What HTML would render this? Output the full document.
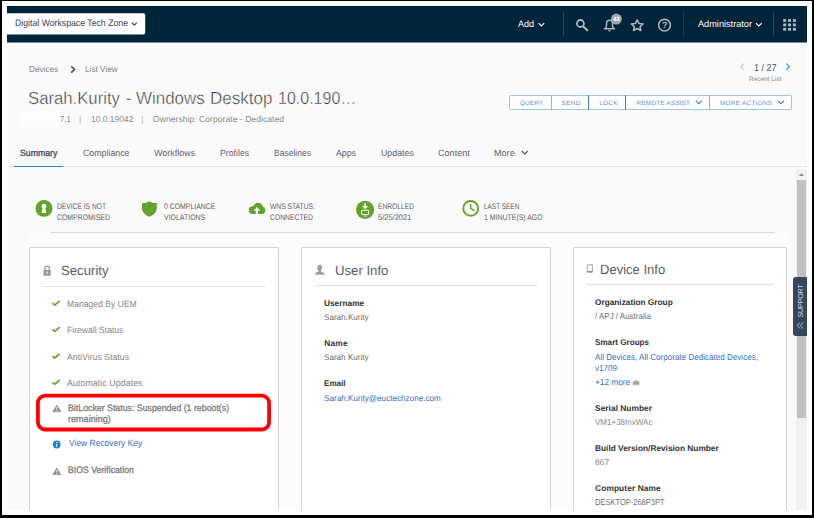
<!DOCTYPE html>
<html lang="en">
<head>
<meta charset="utf-8">
<title>Device Details - Sarah.Kurity</title>
<style>
html,body{margin:0;padding:0;}
body{width:814px;height:518px;position:relative;overflow:hidden;background:#ffffff;
  font-family:"Liberation Sans",sans-serif;}
.a{position:absolute;}
.t{position:absolute;white-space:pre;line-height:1;text-rendering:geometricPrecision;transform-origin:0 50%;font-family:"Liberation Sans",sans-serif;}
svg{position:absolute;overflow:visible;}
.frame{left:0;top:0;width:810px;height:514px;border-style:solid;border-color:#000;border-width:1px 2px 3px 2px;}
.page{left:7px;top:6px;width:800px;height:504px;background:#fafafa;overflow:hidden;}
.hdr{left:7px;top:6px;width:800px;height:36.6px;background:#00243a;}
.og{left:7px;top:13.2px;width:138px;height:21.3px;background:#fff;border-radius:0 2px 2px 0;}
.vd{width:1px;top:12.3px;height:23.7px;background:#2a4558;}
.card{background:#fff;border:1px solid #d3d3d3;border-radius:1.5px;box-sizing:border-box;top:247px;height:280px;}
.hl{height:1px;background:#dfdfdf;}
.btns{left:508.5px;top:94.7px;width:283.5px;height:15.7px;box-sizing:border-box;background:#fff;border:1px solid #a2c4ed;border-radius:2px;}
.bd{top:94.7px;width:1.1px;height:15.7px;background:#3f82d4;}
</style>
</head>
<body>
<div class="a page"></div>
<svg style="left:0;top:0" width="814" height="518" viewBox="0 0 814 518">
  <rect x="7" y="6" width="800" height="36.5" fill="#00243a"/>
  <path d="M7 13.2 L143.2 13.2 Q145.2 13.2 145.2 15.2 L145.2 32.6 Q145.2 34.6 143.2 34.6 L7 34.6 Z" fill="#fff"/>
</svg>
<div class="a vd" style="left:562.8px"></div>
<div class="a vd" style="left:683.4px;background:#1c3a4e"></div>
<div class="a vd" style="left:772.8px"></div>

<!-- header icons -->
<svg style="left:0;top:0" width="814" height="518" viewBox="0 0 814 518">
  <!-- chevrons -->
  <path d="M131.8 22.7 L134.3 25.2 L136.8 22.7" fill="none" stroke="#3d4258" stroke-width="1.2"/>
  <path d="M538.6 23.2 L541.4 25.9 L544.2 23.2" fill="none" stroke="#fff" stroke-width="1.1"/>
  <path d="M755.9 23.1 L758.8 25.9 L761.7 23.1" fill="none" stroke="#fff" stroke-width="1.1"/>
  <!-- search -->
  <circle cx="580.4" cy="23.5" r="3.5" fill="none" stroke="#aeb8bf" stroke-width="1.8"/>
  <path d="M583.2 26.4 L587.3 30.2" stroke="#aeb8bf" stroke-width="2.1" stroke-linecap="round"/>
  <!-- bell -->
  <path d="M604.9 28.6 C606 27.8 606.5 27.2 606.5 26 L606.5 23.8 C606.5 21.5 607.7 20.2 609.5 20.2 C611.3 20.2 612.5 21.5 612.5 23.8 L612.5 26 C612.5 27.2 613 27.8 614.1 28.6" fill="none" stroke="#a9b3ba" stroke-width="1.5"/>
  <path d="M604.4 28.7 L614.6 28.7" stroke="#a9b3ba" stroke-width="1.5" stroke-linecap="round"/>
  <path d="M608.1 30.2 A1.4 1.4 0 0 0 610.9 30.2 Z" fill="#a9b3ba"/>
  <circle cx="616.4" cy="19.1" r="5.5" fill="#9ca6ad"/>
  <!-- star -->
  <path d="M637.2 19.9 L639 23.6 L643 24 L640 26.7 L640.9 30.5 L637.2 28.5 L633.5 30.5 L634.4 26.7 L631.4 24 L635.4 23.6 Z" fill="none" stroke="#aeb8bf" stroke-width="1.5" stroke-linejoin="round"/>
  <!-- help -->
  <circle cx="664.5" cy="25.1" r="5.9" fill="none" stroke="#aeb8bf" stroke-width="1.5"/>
  <!-- grid -->
  <g fill="#aab4bb">
    <rect x="783.2" y="19.1" width="3" height="2.8"/><rect x="788.05" y="19.1" width="3" height="2.8"/><rect x="792.9" y="19.1" width="3" height="2.8"/>
    <rect x="783.2" y="23.5" width="3" height="2.8"/><rect x="788.05" y="23.5" width="3" height="2.8"/><rect x="792.9" y="23.5" width="3" height="2.8"/>
    <rect x="783.2" y="27.9" width="3" height="2.8"/><rect x="788.05" y="27.9" width="3" height="2.8"/><rect x="792.9" y="27.9" width="3" height="2.8"/>
  </g>
  <!-- breadcrumb arrow -->
  <path d="M71.2 66.3 L74.5 69.5 L71.2 72.7" fill="none" stroke="#4a5362" stroke-width="1.7"/>
  <!-- pager arrows -->
  <path d="M744 63.6 L740.9 66.7 L744 69.8" fill="none" stroke="#a9c9ee" stroke-width="1.1"/>
  <path d="M786.2 63.6 L789.5 66.7 L786.2 69.8" fill="none" stroke="#4a8fe2" stroke-width="1.25"/>
  <!-- More chevron -->
  <path d="M521.8 150.8 L524.8 153.9 L527.8 150.8" fill="none" stroke="#4a5560" stroke-width="1.2"/>
</svg>
<span class="t" style="left:613px;top:16.9px;font-size:6.2px;font-weight:700;color:#fff;letter-spacing:-0.15px">43</span>
<span class="t" style="left:662px;top:20.8px;font-size:9px;font-weight:700;color:#aeb8bf">?</span>

<!-- redacted patch -->
<div class="a" style="left:20.6px;top:111.4px;width:38.6px;height:15.4px;background:#fdfdfd"></div>

<!-- buttons -->
<div class="a btns"></div>
<div class="a bd" style="left:551px;background:#8db6e6"></div>
<div class="a bd" style="left:588px"></div>
<div class="a bd" style="left:624.8px"></div>
<div class="a bd" style="left:708.9px;background:#7fafe6"></div>
<svg style="left:0;top:0" width="814" height="518" viewBox="0 0 814 518">
  <path d="M695.9 100.9 L698.8 103.8 L701.7 100.9" fill="none" stroke="#2f74c8" stroke-width="1.15"/>
  <path d="M778.1 100.9 L781 103.8 L783.9 100.9" fill="none" stroke="#2f74c8" stroke-width="1.15"/>
</svg>

<!-- tabs line -->
<div class="a" style="left:7px;top:166.3px;width:800px;height:1px;background:#dfe5ea"></div>
<div class="a" style="left:14.1px;top:165.6px;width:48.8px;height:1.6px;background:#2f7bd0"></div>

<!-- scrollbar -->
<div class="a" style="left:796px;top:168.8px;width:11px;height:341.2px;background:#f1f1f1"></div>
<div class="a" style="left:797.2px;top:180px;width:8.6px;height:237.5px;background:#c1c1c1"></div>
<svg style="left:0;top:0" width="814" height="518" viewBox="0 0 814 518">
  <path d="M798.9 176 L801.5 173.2 L804.1 176 Z" fill="#8a8a8a"/>
</svg>

<!-- status row hr -->
<div class="a hl" style="left:50.5px;top:231.6px;width:723.3px;background:#d6d6d6"></div>

<!-- cards -->
<div class="a" style="left:29px;top:232.8px;width:758.5px;height:277.2px;background:#fcfcfc"></div>
<div class="a card" style="left:29.3px;width:249.8px"></div>
<div class="a card" style="left:300.5px;width:250.5px"></div>
<div class="a card" style="left:573px;width:214.2px"></div>
<div class="a hl" style="left:43.2px;top:285.8px;width:221.6px"></div>
<div class="a hl" style="left:315px;top:284.6px;width:222px"></div>
<div class="a hl" style="left:585.9px;top:283.6px;width:187.9px"></div>

<!-- icons -->
<svg style="left:0;top:0" width="814" height="518" viewBox="0 0 814 518">
  <!-- status: not compromised -->
  <circle cx="44" cy="208.4" r="8.45" fill="#61a32c"/>
  <circle cx="43.9" cy="206.2" r="2.4" fill="#fff"/>
  <path d="M42.6 207.4 L45.2 207.4 L46.2 213.1 L41.6 213.1 Z" fill="#fff"/>
  <!-- shield -->
  <path d="M142 203 C145 203 147.6 202.5 149.4 201.2 C151.2 202.5 153.8 203 156.8 203 L156.8 208 C156.8 212 153.8 215 149.4 216.8 C145 215 142 212 142 208 Z" fill="#61a32c"/>
  <!-- cloud -->
  <g fill="#61a32c">
    <circle cx="252.7" cy="210.1" r="3.9"/>
    <circle cx="258.1" cy="207.6" r="4.9"/>
    <circle cx="261.6" cy="210.3" r="3.7"/>
    <rect x="252.7" y="209" width="8.9" height="5"/>
  </g>
  <path d="M256.9 207.1 L260.2 210.8 L258 210.8 L258 214.4 L255.8 214.4 L255.8 210.8 L253.6 210.8 Z" fill="#fcfcfc"/>
  <!-- enrolled -->
  <circle cx="365.1" cy="209.8" r="9.1" fill="#61a32c"/>
  <path d="M364.2 203.3 L366 203.3 L366 206 L368.2 206 L365.1 209.1 L362 206 L364.2 206 Z" fill="#fff"/>
  <rect x="361.7" y="210.2" width="6.9" height="4.3" rx="0.5" fill="none" stroke="#fff" stroke-width="1"/>
  <path d="M363.4 216 L366.8 216" stroke="#fff" stroke-width="0.9"/>
  <!-- clock -->
  <circle cx="470.7" cy="208.4" r="7.4" fill="#fdfdfd" stroke="#61a32c" stroke-width="1.9"/>
  <path d="M470.6 204 L470.6 208.4 L474.6 210.7" fill="none" stroke="#61a32c" stroke-width="1.5"/>

  <!-- lock -->
  <path d="M44.9 270.2 L44.9 268.9 C44.9 267.1 45.8 266.2 47.1 266.2 C48.4 266.2 49.3 267.1 49.3 268.9 L49.3 270.2" fill="none" stroke="#999" stroke-width="1.2"/>
  <rect x="43.5" y="270" width="7.2" height="5.8" rx="0.6" fill="#999"/>
  <rect x="46.6" y="271.6" width="1" height="2.4" fill="#fff"/>
  <!-- user -->
  <ellipse cx="319.7" cy="267.7" rx="2.35" ry="2.9" fill="#9d9d9d"/>
  <path d="M315.1 274.8 L315.1 274.1 C315.4 272.8 317.2 272.2 318.5 271.5 L318.5 269.6 L320.9 269.6 L320.9 271.5 C322.2 272.2 324.3 272.8 324.7 274.1 L324.7 274.8 Z" fill="#9d9d9d"/>
  <!-- device -->
  <rect x="587.2" y="264.9" width="5.2" height="7.3" rx="0.3" fill="#fff" stroke="#9b9b9b" stroke-width="0.9"/>
  <path d="M587.2 271.7 L592.4 271.7" stroke="#8f8f8f" stroke-width="1.3"/>

  <!-- checks -->
  <g fill="none" stroke="#61a32c" stroke-width="1.7" stroke-linejoin="bevel">
    <path d="M52.5 303.2 L54.7 305.1 L59.7 300.9"/>
    <path d="M52.5 329.4 L54.7 331.3 L59.7 327.1"/>
    <path d="M52.5 356.1 L54.7 358 L59.7 353.8"/>
    <path d="M52.5 382.4 L54.7 384.3 L59.7 380.1"/>
  </g>
  <!-- warnings -->
  <path d="M56.8 404.9 L61 411.8 L52.6 411.8 Z" fill="#8e8e8e" stroke="#8e8e8e" stroke-width="0.4" stroke-linejoin="round"/>
  <rect x="56.35" y="407" width="0.9" height="2.5" fill="#fff"/><rect x="56.35" y="410.1" width="0.9" height="0.9" fill="#fff"/>
  <path d="M56.8 467.8 L61 474.7 L52.6 474.7 Z" fill="#8e8e8e" stroke="#8e8e8e" stroke-width="0.4" stroke-linejoin="round"/>
  <rect x="56.35" y="469.9" width="0.9" height="2.5" fill="#fff"/><rect x="56.35" y="473" width="0.9" height="0.9" fill="#fff"/>
  <!-- info -->
  <circle cx="56.7" cy="444.5" r="3.9" fill="#1c86c8"/>
  <rect x="56.2" y="443.9" width="1" height="2.8" fill="#fff"/><rect x="56.2" y="442" width="1" height="1.1" fill="#fff"/>
  <!-- red highlight -->
  <rect x="37.9" y="395.6" width="231.2" height="33.9" rx="7.4" ry="7.4" fill="none" stroke="#fe0000" stroke-width="3.8"/>
  <!-- small briefcase -->
  <path d="M633 381.8 L639.2 381.8 L639.2 384.8 L633 384.8 Z M634.9 381.8 L634.9 380.7 L637.3 380.7 L637.3 381.8" fill="#a8a8a8" stroke="#a8a8a8" stroke-width="0.5"/>
</svg>

<!-- support tab -->
<div class="a" style="left:792.5px;top:277px;width:14.5px;height:59px;background:#33475a;border-radius:3px 0 0 3px"></div>
<span class="t" style="left:801.4px;top:301.2px;font-size:7.2px;color:#cdd7e0;letter-spacing:-0.2px;transform:translate(-50%,-50%) rotate(-90deg);transform-origin:center">SUPPORT</span>
<svg style="left:0;top:0" width="814" height="518" viewBox="0 0 814 518">
  <path d="M800.1 322.4 L797.3 325.5 L800.1 328.6 M803.2 322.4 L800.4 325.5 L803.2 328.6" fill="none" stroke="#c9d3dc" stroke-width="0.8"/>
</svg>

<span class="t" style="left:14.70px;top:18.00px;font-size:9.4px;transform:scaleX(0.9293);color:#3d4258">Digital Workspace Tech Zone</span>
<span class="t" style="left:518.30px;top:19.00px;font-size:9.4px;transform:scaleX(0.9648);color:#ffffff">Add</span>
<span class="t" style="left:698.20px;top:19.00px;font-size:9.4px;transform:scaleX(0.9777);color:#ffffff">Administrator</span>
<span class="t" style="left:28.90px;top:65.20px;font-size:8.6px;transform:scaleX(0.9517);color:#858585">Devices</span>
<span class="t" style="left:84.50px;top:65.20px;font-size:8.6px;transform:scaleX(0.9581);color:#858585">List View</span>
<span class="t" style="left:28.30px;top:89.50px;font-size:17.6px;-webkit-text-stroke:0.4px #fafafa;transform:scaleX(0.9493);color:#3c3c3c">Sarah.Kurity</span>
<span class="t" style="left:125.70px;top:89.50px;font-size:17.6px;-webkit-text-stroke:0.4px #fafafa;letter-spacing:0.000px;color:#3c3c3c">-</span>
<span class="t" style="left:135.50px;top:89.50px;font-size:17.6px;-webkit-text-stroke:0.4px #fafafa;transform:scaleX(0.9625);color:#3c3c3c">Windows</span>
<span class="t" style="left:209.70px;top:89.50px;font-size:17.6px;-webkit-text-stroke:0.4px #fafafa;transform:scaleX(0.9667);color:#3c3c3c">Desktop</span>
<span class="t" style="left:278.00px;top:89.50px;font-size:17.6px;-webkit-text-stroke:0.4px #fafafa;transform:scaleX(0.9095);color:#3c3c3c">10.0.190…</span>
<span class="t" style="left:60.00px;top:115.20px;font-size:8.6px;transform:scaleX(0.8952);color:#8a8a8a">7,1</span>
<span class="t" style="left:79.00px;top:115.20px;font-size:8.6px;letter-spacing:0.000px;color:#b5b5b5">|</span>
<span class="t" style="left:90.80px;top:115.20px;font-size:8.6px;transform:scaleX(0.9857);color:#8a8a8a">10.0.19042</span>
<span class="t" style="left:141.20px;top:115.20px;font-size:8.6px;letter-spacing:0.000px;color:#b5b5b5">|</span>
<span class="t" style="left:153.00px;top:115.20px;font-size:8.6px;letter-spacing:0.019px;color:#8a8a8a">Ownership: Corporate - Dedicated</span>
<span class="t" style="left:753.90px;top:63.80px;font-size:10.2px;transform:scaleX(0.8784);color:#555555">1 / 27</span>
<span class="t" style="left:749.00px;top:76.80px;font-size:6.5px;transform:scaleX(0.9898);color:#858585">Recent List</span>
<span class="t" style="left:520.00px;top:101.10px;font-size:6.3px;letter-spacing:0.180px;color:#5a90d9">QUERY</span>
<span class="t" style="left:561.60px;top:101.10px;font-size:6.3px;letter-spacing:0.400px;color:#5a90d9">SEND</span>
<span class="t" style="left:599.30px;top:101.10px;font-size:6.3px;letter-spacing:0.315px;color:#5a90d9">LOCK</span>
<span class="t" style="left:636.60px;top:101.10px;font-size:6.3px;letter-spacing:0.204px;color:#5a90d9">REMOTE ASSIST</span>
<span class="t" style="left:720.00px;top:101.10px;font-size:6.3px;letter-spacing:0.338px;color:#5a90d9">MORE ACTIONS</span>
<span class="t" style="left:19.60px;top:149.20px;font-size:9.1px;-webkit-text-stroke:0.3px #3c4a5a;transform:scaleX(0.9613);color:#3c4a5a">Summary</span>
<span class="t" style="left:82.50px;top:149.20px;font-size:9.1px;transform:scaleX(0.9681);color:#5a6470">Compliance</span>
<span class="t" style="left:154.00px;top:149.20px;font-size:9.1px;transform:scaleX(0.9861);color:#5a6470">Workflows</span>
<span class="t" style="left:220.10px;top:149.20px;font-size:9.1px;transform:scaleX(0.9595);color:#5a6470">Profiles</span>
<span class="t" style="left:274.40px;top:149.20px;font-size:9.1px;transform:scaleX(0.9382);color:#5a6470">Baselines</span>
<span class="t" style="left:336.00px;top:149.20px;font-size:9.1px;transform:scaleX(0.9646);color:#5a6470">Apps</span>
<span class="t" style="left:380.60px;top:149.20px;font-size:9.1px;transform:scaleX(0.9683);color:#5a6470">Updates</span>
<span class="t" style="left:437.90px;top:149.20px;font-size:9.1px;letter-spacing:0.023px;color:#5a6470">Content</span>
<span class="t" style="left:494.40px;top:149.20px;font-size:9.1px;transform:scaleX(0.9991);color:#5a6470">More</span>
<span class="t" style="left:56.90px;top:202.80px;font-size:8.1px;transform:scaleX(0.8253);color:#5e5e5e">DEVICE IS NOT</span>
<span class="t" style="left:56.90px;top:214.00px;font-size:8.1px;transform:scaleX(0.8524);color:#5e5e5e">COMPROMISED</span>
<span class="t" style="left:163.80px;top:202.80px;font-size:8.1px;transform:scaleX(0.8527);color:#5e5e5e">0 COMPLIANCE</span>
<span class="t" style="left:163.80px;top:214.00px;font-size:8.1px;transform:scaleX(0.8586);color:#5e5e5e">VIOLATIONS</span>
<span class="t" style="left:270.40px;top:202.80px;font-size:8.1px;transform:scaleX(0.8298);color:#5e5e5e">WNS STATUS:</span>
<span class="t" style="left:270.40px;top:214.00px;font-size:8.1px;transform:scaleX(0.8388);color:#5e5e5e">CONNECTED</span>
<span class="t" style="left:377.60px;top:202.80px;font-size:8.1px;transform:scaleX(0.8249);color:#5e5e5e">ENROLLED</span>
<span class="t" style="left:377.60px;top:214.00px;font-size:8.1px;transform:scaleX(0.9274);color:#5e5e5e">5/25/2021</span>
<span class="t" style="left:484.40px;top:202.80px;font-size:8.1px;transform:scaleX(0.7952);color:#5e5e5e">LAST SEEN</span>
<span class="t" style="left:484.40px;top:214.00px;font-size:8.1px;transform:scaleX(0.8572);color:#5e5e5e">1 MINUTE(S) AGO</span>
<span class="t" style="left:61.20px;top:263.70px;font-size:13.3px;-webkit-text-stroke:0.12px #ffffff;transform:scaleX(0.9907);color:#454545">Security</span>
<span class="t" style="left:335.40px;top:263.70px;font-size:13.3px;-webkit-text-stroke:0.12px #ffffff;transform:scaleX(0.9897);color:#454545">User Info</span>
<span class="t" style="left:600.00px;top:263.10px;font-size:13.3px;-webkit-text-stroke:0.12px #ffffff;transform:scaleX(0.9800);color:#454545">Device Info</span>
<span class="t" style="left:66.60px;top:299.90px;font-size:9.1px;transform:scaleX(0.9445);color:#868686">Managed By UEM</span>
<span class="t" style="left:66.60px;top:325.90px;font-size:9.1px;transform:scaleX(0.9457);color:#868686">Firewall Status</span>
<span class="t" style="left:66.60px;top:352.80px;font-size:9.1px;transform:scaleX(0.9608);color:#868686">AntiVirus Status</span>
<span class="t" style="left:66.60px;top:378.90px;font-size:9.1px;transform:scaleX(0.9838);color:#868686">Automatic Updates</span>
<span class="t" style="left:67.70px;top:403.60px;font-size:9.3px;-webkit-text-stroke:0.3px #7d7d7d;transform:scaleX(0.9446);color:#7d7d7d">BitLocker Status: Suspended (1 reboot(s)</span>
<span class="t" style="left:67.70px;top:414.90px;font-size:9.3px;-webkit-text-stroke:0.3px #7d7d7d;transform:scaleX(0.9745);color:#7d7d7d">remaining)</span>
<span class="t" style="left:69.10px;top:439.40px;font-size:9.1px;transform:scaleX(0.9315);color:#3a6fc4">View Recovery Key</span>
<span class="t" style="left:68.10px;top:465.80px;font-size:9.3px;-webkit-text-stroke:0.3px #7d7d7d;transform:scaleX(0.9377);color:#7d7d7d">BIOS Verification</span>
<span class="t" style="left:324.20px;top:299.10px;font-size:8.4px;font-weight:700;transform:scaleX(0.9922);color:#333333">Username</span>
<span class="t" style="left:324.20px;top:313.10px;font-size:8.6px;transform:scaleX(0.9430);color:#6f6f6f">Sarah.Kurity</span>
<span class="t" style="left:324.20px;top:338.80px;font-size:8.4px;font-weight:700;letter-spacing:0.229px;color:#333333">Name</span>
<span class="t" style="left:324.20px;top:353.00px;font-size:8.6px;transform:scaleX(0.9430);color:#6f6f6f">Sarah Kurity</span>
<span class="t" style="left:324.20px;top:379.00px;font-size:8.4px;font-weight:700;transform:scaleX(0.9660);color:#333333">Email</span>
<span class="t" style="left:324.20px;top:393.70px;font-size:8.6px;transform:scaleX(0.9475);color:#3a6fc4">Sarah.Kurity@euctechzone.com</span>
<span class="t" style="left:595.30px;top:298.30px;font-size:8.4px;font-weight:700;transform:scaleX(0.9880);color:#333333">Organization Group</span>
<span class="t" style="left:595.30px;top:312.20px;font-size:8.6px;transform:scaleX(0.9288);color:#6f6f6f">/ APJ / Australia</span>
<span class="t" style="left:595.10px;top:338.10px;font-size:8.4px;font-weight:700;transform:scaleX(0.9685);color:#333333">Smart Groups</span>
<span class="t" style="left:595.10px;top:352.90px;font-size:8.7px;transform:scaleX(0.9299);color:#3a6fc4">All Devices, All Corporate Dedicated Devices,</span>
<span class="t" style="left:595.10px;top:364.10px;font-size:8.5px;transform:scaleX(0.9537);color:#3a6fc4">v1709</span>
<span class="t" style="left:595.10px;top:377.80px;font-size:8.7px;transform:scaleX(0.9526);color:#3a6fc4">+12 more</span>
<span class="t" style="left:595.10px;top:403.90px;font-size:8.4px;font-weight:700;letter-spacing:0.009px;color:#333333">Serial Number</span>
<span class="t" style="left:595.10px;top:417.60px;font-size:8.6px;transform:scaleX(0.9326);color:#888888">VM1+38InxWAc</span>
<span class="t" style="left:595.10px;top:443.60px;font-size:8.4px;font-weight:700;transform:scaleX(0.9917);color:#333333">Build Version/Revision Number</span>
<span class="t" style="left:595.10px;top:458.00px;font-size:8.6px;transform:scaleX(0.9830);color:#888888">867</span>
<span class="t" style="left:595.10px;top:483.50px;font-size:8.4px;font-weight:700;letter-spacing:0.076px;color:#333333">Computer Name</span>
<span class="t" style="left:595.10px;top:497.80px;font-size:8.6px;transform:scaleX(0.8730);color:#6f6f6f">DESKTOP-268P3PT</span>

<div class="a" style="left:2px;top:510px;width:810px;height:5px;background:#fff"></div>
<div class="a frame"></div>
</body>
</html>
